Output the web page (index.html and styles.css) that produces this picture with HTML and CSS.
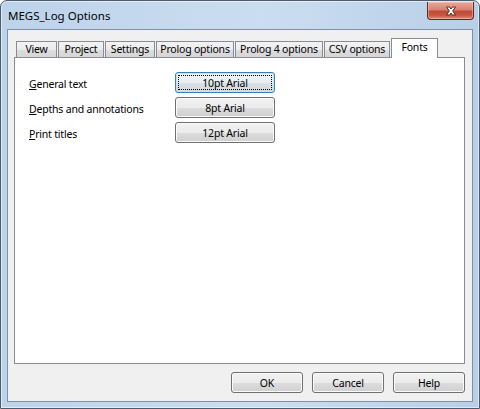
FILE: index.html
```html
<!DOCTYPE html>
<html lang="en">
<head>
    <meta charset="UTF-8">
    <title>MEGS_Log Options</title>
    <link rel="stylesheet" href="styles.css">
</head>
<body>
    <div class="window">
        <div class="titlebar">
            <span class="title">MEGS_Log Options</span>
            <button type="button" class="close-btn" aria-label="Close">
                <svg width="12" height="10" viewBox="0 0 12 10">
                    <path d="M1.5 1 L4.5 1 L6 3 L7.5 1 L10.5 1 L7.7 5 L10.5 9 L7.5 9 L6 7 L4.5 9 L1.5 9 L4.3 5 Z" fill="#fff" stroke="#5a2a22" stroke-width="1" stroke-linejoin="round"/>
                </svg>
            </button>
        </div>
        <div class="client">
            <div class="tabs">
                <div class="tab" style="width: 41px">View</div>
                <div class="tab" style="width: 46px">Project</div>
                <div class="tab" style="width: 50px">Settings</div>
                <div class="tab" style="width: 78px">Prolog options</div>
                <div class="tab" style="width: 88px">Prolog 4 options</div>
                <div class="tab" style="width: 66px">CSV options</div>
                <div class="tab active" style="width: 47px">Fonts</div>
            </div>
            <div class="panel">
                <div class="font-grid">
                    <label class="font-label"><u>G</u>eneral text</label>
                    <button type="button" class="btn focused">10pt Arial</button>
                    <label class="font-label"><u>D</u>epths and annotations</label>
                    <button type="button" class="btn">8pt Arial</button>
                    <label class="font-label"><u>P</u>rint titles</label>
                    <button type="button" class="btn">12pt Arial</button>
                </div>
            </div>
            <div class="actions">
                <button type="button" class="btn">OK</button>
                <button type="button" class="btn">Cancel</button>
                <button type="button" class="btn">Help</button>
            </div>
        </div>
    </div>
</body>
</html>
```

FILE: styles.css
```css
body {
    margin: 0;
    font-family: "Noto Sans", "Open Sans", sans-serif;
    font-size: 10.5px;
    letter-spacing: -0.2px;
    color: #000;
    background: #ffffff;
}
.window {
    width: 480px;
    height: 409px;
    box-sizing: border-box;
    border: 1px solid #4c5b6d;
    border-radius: 7px 7px 0 0;
    background: linear-gradient(to right, #bdd3ea 0%, #cbddf0 55%, #b8cfe8 100%);
    box-shadow: inset 0 0 0 1px rgba(255, 255, 255, 0.55);
    padding: 0 6px 6px 6px;
    display: flex;
    flex-direction: column;
}
.titlebar {
    height: 28px;
    display: flex;
    justify-content: space-between;
    align-items: flex-start;
}
.title {
    font-size: 11.5px;
    letter-spacing: 0;
    margin-top: 7px;
    margin-left: 1px;
    color: #000;
}
.close-btn {
    width: 47px;
    height: 18px;
    margin-top: 1px;
    margin-right: -1px;
    padding: 0;
    border: 1px solid #5b2a22;
    border-top: none;
    border-radius: 0 0 4px 4px;
    background: linear-gradient(to bottom, #e9a99b 0%, #d98172 45%, #c14a36 55%, #c75a44 80%, #e0907a 100%);
    box-shadow: inset 0 0 0 1px rgba(255, 210, 200, 0.45);
    display: flex;
    align-items: center;
    justify-content: center;
}
.client {
    flex: 1;
    border: 1px solid #7e91a6;
    background: #f0f0f0;
    padding: 8px 7px 8px 6px;
    display: flex;
    flex-direction: column;
}
.tabs {
    display: flex;
    align-items: flex-end;
    gap: 1px;
    height: 20px;
    margin-left: 2px;
    margin-bottom: -1px;
}
.tab {
    box-sizing: border-box;
    height: 17px;
    border: 1px solid #898c95;
    background: linear-gradient(to bottom, #f3f3f3 0%, #ebebeb 50%, #dddddd 51%, #d6d6d6 100%);
    text-align: center;
    line-height: 15px;
    white-space: nowrap;
}
.tab.active {
    position: relative;
    z-index: 1;
    height: 20px;
    padding-top: 1px;
    background: #ffffff;
    border-bottom: none;
}
.panel {
    height: 307px;
    box-sizing: border-box;
    border: 1px solid #898c95;
    background: #ffffff;
    padding: 14px 14px;
}
.font-grid {
    display: grid;
    grid-template-columns: 146px 100px;
    grid-auto-rows: 21px;
    row-gap: 4px;
    align-items: center;
}
.font-label {
    padding-top: 2px;
}
.btn {
    box-sizing: border-box;
    height: 21px;
    padding: 0;
    font-family: inherit;
    font-size: 10.5px;
    letter-spacing: -0.2px;
    color: #000;
    border: 1px solid #707070;
    border-radius: 3px;
    background: linear-gradient(to bottom, #f2f2f2 0%, #ebebeb 50%, #dddddd 51%, #cfcfcf 100%);
    box-shadow: inset 0 0 0 1px #fbfbfb;
}
.btn.focused {
    border-color: #3c7fb1;
    box-shadow: inset 0 0 0 1px #c4e5f6;
    background: linear-gradient(to bottom, #f0f4f6 0%, #e8eef1 50%, #dbe2e6 51%, #d0d8dc 100%);
    outline: 1px dotted #000;
    outline-offset: -4px;
}
.actions {
    margin-top: 8px;
    display: flex;
    justify-content: flex-end;
    gap: 9px;
}
.actions .btn {
    width: 72px;
}
```
